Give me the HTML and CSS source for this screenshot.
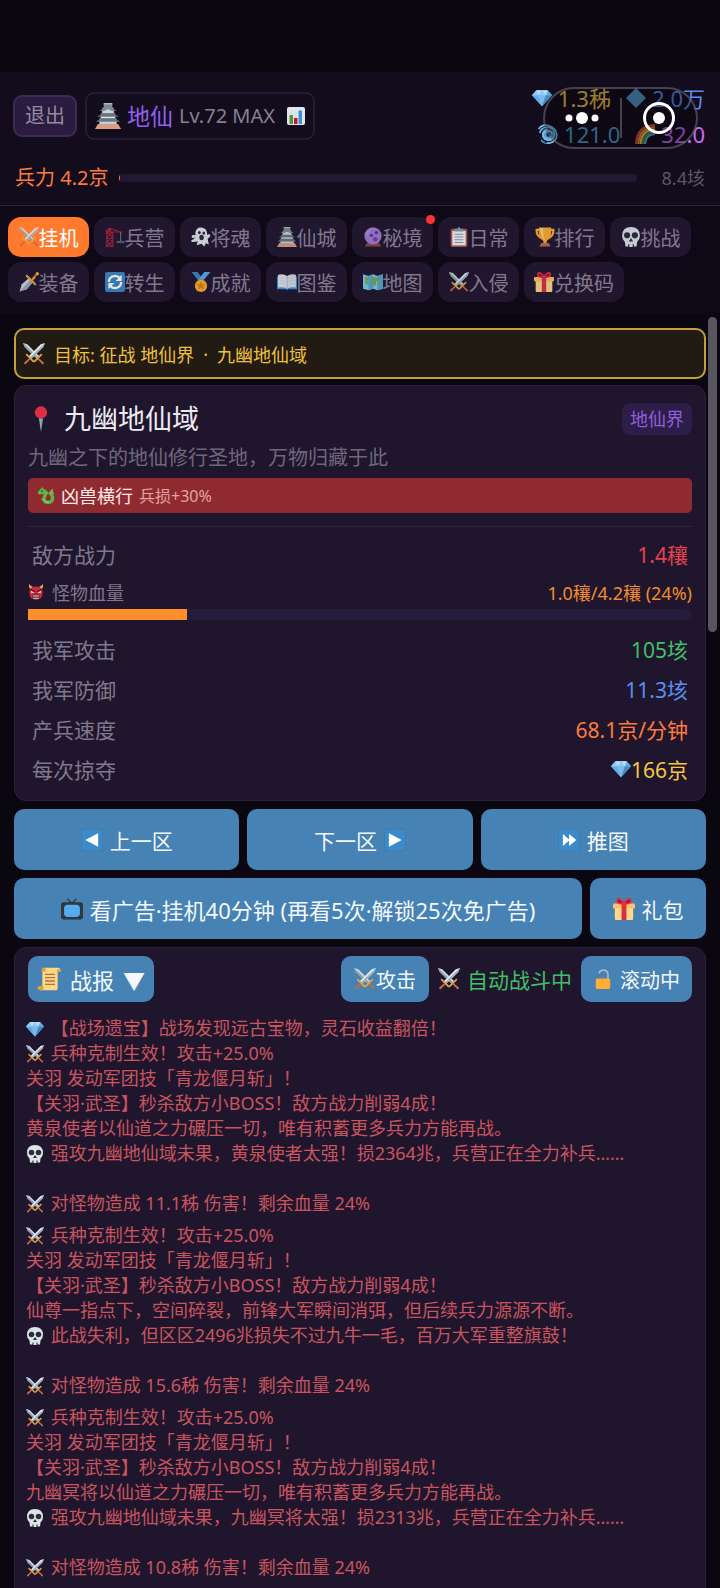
FILE: index.html
```html
<!DOCTYPE html>
<html lang="zh-CN">
<head>
<meta charset="utf-8">
<meta name="viewport" content="width=device-width, initial-scale=1">
<title>九幽地仙域</title>
<link rel="stylesheet" href="styles.css">
</head>
<body>
<svg class="sprite" aria-hidden="true">
  <symbol id="i-swords" viewBox="0 0 36 36">
    <path d="M0 0l7 2 20 20-4 4L3 7z" fill="#ccd6dd"/><path d="M0 0l25 24-2 2L3 7z" fill="#8899a6"/>
    <path d="M36 0l-7 2L9 22l4 4L33 7z" fill="#e1e8ed"/><path d="M36 0L11 24l2 2L33 7z" fill="#9aaab4"/>
    <path d="M26 25l8 7q1 3-2 3l-8-8zM10 25l-8 7q-1 3 2 3l8-8z" fill="#c1694f"/>
    <path d="M19 30l11-11M17 30L6 19" stroke="#e8a03a" stroke-width="3" stroke-linecap="round"/>
  </symbol>
  <symbol id="i-castle" viewBox="0 0 36 36">
    <path d="M4 29h28l4 7H0z" fill="#d99e82"/><path d="M6 24h24v5H6z" fill="#ccd6dd"/>
    <path d="M2 25q4-1 5-5h22q1 4 5 5v1H2z" fill="#66757f"/><path d="M8 17h20v4H8z" fill="#e1e8ed"/>
    <path d="M4 18q4-1 5-5h18q1 4 5 5v1H4z" fill="#66757f"/><path d="M10 9h16v5H10z" fill="#ccd6dd"/>
    <path d="M6 11q4-1 5-5h14q1 4 5 5zM12 1h12v5H12z" fill="#7b8a95"/><path d="M12 12q6-7 12 0z" fill="#ccd6dd"/><path d="M12 0h12v2H12z" fill="#aab8c2"/>
  </symbol>
  <symbol id="i-chart" viewBox="0 0 36 36">
    <rect width="36" height="36" rx="4" fill="#e1e8ed"/><path d="M9 1v34M18 1v34M27 1v34M1 12h34M1 23h34" stroke="#ccd6dd"/>
    <path d="M5 16h7v18H5z" fill="#5c913b"/><path d="M14 22h7v12h-7z" fill="#be1931"/><path d="M23 7h7v27h-7z" fill="#3b94d9"/>
  </symbol>
  <symbol id="i-gem" viewBox="0 0 36 36">
    <path d="M8 4h20l8 9-18 20L0 13z" fill="#8ccaf7"/><path d="M0 13h11l7 20zM28 4l8 9H25z" fill="#5dadec"/>
    <path d="M11 13h14l-7 20z" fill="#7bb9ea"/><path d="M25 13h11L18 33z" fill="#4289c1"/><path d="M8 4l3 9L18 4l7 9 3-9z" fill="#bdddf4"/><path d="M0 13L8 4l3 9z" fill="#8ccaf7"/>
  </symbol>
  <symbol id="i-diamond" viewBox="0 0 36 36"><path d="M18 0l18 18-18 18L0 18z" fill="#5299cb"/></symbol>
  <symbol id="i-cyclone" viewBox="0 0 36 36">
    <circle cx="19" cy="19" r="12" fill="#4a9fd8"/><circle cx="19" cy="19" r="4" fill="#171b3a"/>
    <path d="M1 9Q8-1 20 3t14 16q0 12-12 15-10 2-16-5M3 16q3-10 14-10t13 13q-1 9-11 9T9 19q1-7 9-7 6 0 7 7" fill="none" stroke="#79bee8" stroke-width="3"/>
    <path d="M5 23q1 9 11 11M9 10q9-6 18 3" fill="none" stroke="#1d3a5f" stroke-width="2"/>
  </symbol>
  <symbol id="i-rainbow" viewBox="0 0 36 36">
    <g fill="none" stroke-width="4"><path d="M2 36Q3 3 36 2" stroke="#dd4b39"/><path d="M6 36Q7 7 36 6" stroke="#e88a2d"/><path d="M10 36q1-25 26-26" stroke="#f4ca50"/><path d="M14 36q1-21 22-22" stroke="#5c913b"/><path d="M18 36q1-17 18-18" stroke="#55acee"/></g>
  </symbol>
  <symbol id="i-crane" viewBox="0 0 36 36">
    <g fill="none" stroke="#a5203a" stroke-width="2"><path d="M3 35V9h11v26M3 35l11-9-11-8 11-9M14 35L3 26l11-8L3 9M1 9h31M8 2L1 9M8 2l20 7M1 35h15"/></g>
    <path d="M5 2h6v7H5z" fill="#a5203a"/><path d="M28 9v17" stroke="#66757f" stroke-width="2"/><path d="M21 25h14v4H21z" fill="#55606b"/>
  </symbol>
  <symbol id="i-ghost" viewBox="0 0 36 36">
    <path d="M8 9Q10 0 19 1q10 1 10 13 4-2 6 1-1 5-5 6l2 11-5-3-3 6-5-5-9 3 2-7-8 1q-5 0-3-3 5-1 6-6-5 4-6-1 1-4 7-2z" fill="#e1e8ed"/>
    <ellipse cx="15" cy="10" rx="2.500" ry="3" fill="#292f33"/><ellipse cx="23" cy="11" rx="2.500" ry="3" fill="#292f33"/><ellipse cx="19" cy="19" rx="4" ry="5" fill="#292f33"/>
  </symbol>
  <symbol id="i-orb" viewBox="0 0 36 36">
    <path d="M7 29h22l4 6H3z" fill="#8f4937"/><circle cx="18" cy="16" r="15.500" fill="#a27ad6"/><path d="M5 12Q9 3 18 3q-9 5-9 15z" fill="#b58be0"/>
    <circle cx="15" cy="15" r="3" fill="#5c3293"/><circle cx="24" cy="10" r="3" fill="#5c3293"/><circle cx="22" cy="22" r="4" fill="#6d42a5"/>
  </symbol>
  <symbol id="i-clip" viewBox="0 0 36 36">
    <rect x="3" y="3" width="30" height="33" rx="3" fill="#a85d48"/><path d="M6 7h24v26H6z" fill="#f5f8fa"/><path d="M10 8V3h5q3-6 6 0h5v5z" fill="#8899a6"/>
    <path d="M10 13h16M10 18h16M10 23h16M10 28h16" stroke="#8899a6" stroke-width="2"/>
  </symbol>
  <symbol id="i-trophy" viewBox="0 0 36 36">
    <path d="M8 5H3q-1 12 11 16M28 5h5q1 12-11 16" fill="none" stroke="#ffac33" stroke-width="4"/><path d="M7 1h22q2 17-8 24v5h-6v-5Q5 18 7 1z" fill="#ffac33"/><path d="M10 2h4q0 14 4 22Q9 16 10 2z" fill="#ffd983"/><path d="M11 29h14l3 6H8z" fill="#c1694f"/>
  </symbol>
  <symbol id="i-skull" viewBox="0 0 36 36">
    <path d="M18 0Q34 0 34 16q0 7-5 11l-1 8h-5v-4h-2v5h-6v-5h-2v4H8l-1-8Q2 23 2 16 2 0 18 0z" fill="#dce3e9"/>
    <circle cx="11" cy="15" r="5.500" fill="#292f33"/><circle cx="25" cy="15" r="5.500" fill="#292f33"/><path d="M18 20l4 6h-8z" fill="#292f33"/>
  </symbol>
  <symbol id="i-dagger" viewBox="0 0 36 36">
    <path d="M1 35l4-13L19 10l7 7-12 14z" fill="#ccd6dd"/><path d="M1 35l21-22 4 4-12 14z" fill="#99aab5"/><path d="M24 10l8-9 3 3-9 8z" fill="#c1694f"/><path d="M14 7l15 15M24 14l4-4" stroke="#e8a03a" stroke-width="4" stroke-linecap="round"/><circle cx="33" cy="3" r="3" fill="#ffac33"/>
  </symbol>
  <symbol id="i-cycle" viewBox="0 0 36 36">
    <rect width="36" height="36" rx="4" fill="#3b88c3"/><path d="M7 18q0-10 11-11 5 0 9 4M29 18q0 10-11 11-5 0-9-4" fill="none" stroke="#fff" stroke-width="4"/><path d="M30 5v11H19zM6 31V20h11z" fill="#fff"/>
  </symbol>
  <symbol id="i-medal" viewBox="0 0 36 36">
    <path d="M1 0h11l10 14-6 5z" fill="#3b88c3"/><path d="M35 0H24L13 14l6 5z" fill="#55acee"/><path d="M12 14h12v4H12z" fill="#c1694f"/><circle cx="18" cy="25" r="11" fill="#ffac33"/><path d="M18 17l2.500 5 5.500.500-4 4 1 5.500-5-3-5 3 1-5.500-4-4 5.500-.500z" fill="#d88410"/>
  </symbol>
  <symbol id="i-book" viewBox="0 0 36 36">
    <path d="M0 8h36v23H20l-2 2-2-2H0z" fill="#3b94d9"/><path d="M2 5q9-3 16 2v23q-7-4-16-2z" fill="#e1e8ed"/><path d="M34 5q-9-3-16 2v23q7-4 16-2z" fill="#d5dee5"/>
    <path d="M5 11q6-1 10 1M5 16q6-1 10 1M5 21q6-1 10 1M31 11q-6-1-10 1M31 16q-6-1-10 1M31 21q-6-1-10 1" fill="none" stroke="#b3c0ca"/><path d="M18 7v23" stroke="#8899a6"/>
  </symbol>
  <symbol id="i-map" viewBox="0 0 36 36">
    <path d="M0 4l10 3 8-3 8 3 10-3v26l-10 3-8-3-8 3-10-3z" fill="#7cc9e6"/><path d="M10 7l8-3v26l-8 3zM26 7l10-3v26l-10 3z" fill="#55a8c8"/>
    <path d="M4 8l5 2 3 3-5 3 3 4-4 4-2-7zM18 9l8 1 5 3-3 4-4-2-1 9-4 1-3-8z" fill="#77a955"/>
  </symbol>
  <symbol id="i-gift" viewBox="0 0 36 36">
    <path d="M3 14h30v20q0 2-2 2H5q-2 0-2-2z" fill="#fdd888"/><rect y="9" width="36" height="8" rx="2" fill="#fcc26b"/><path d="M14 9h8v27h-8z" fill="#dd2e44"/><path d="M18 9Q5 10 7 3q2-5 11 5 9-10 11-5 2 7-11 6z" fill="#a0041e" stroke="#dd2e44" stroke-width="3"/>
  </symbol>
  <symbol id="i-pin" viewBox="0 0 36 36">
    <path d="M15 17h6l-3 19z" fill="#8899a6"/><path d="M16 17h2v17z" fill="#66c0c9"/><circle cx="18" cy="9" r="8.500" fill="#dd2e44"/>
  </symbol>
  <symbol id="i-dragon" viewBox="0 0 36 36">
    <path d="M14 8q6 4 1 11-4 11 6 12 11 0 10-11-1-5-5-7" fill="none" stroke="#5cb447" stroke-width="7"/><path d="M1 11l7-8 3-3 2 4q9 1 8 9l-8 1-9 1z" fill="#5cb447"/><path d="M31 3l3 12-12-2zM20 9l4 5-6 1zM10 22l5 5-7-1z" fill="#77b255"/><circle cx="10" cy="8" r="1.500" fill="#222"/><path d="M14 24q2 7 10 6" fill="none" stroke="#a6d388" stroke-width="2"/>
  </symbol>
  <symbol id="i-ogre" viewBox="0 0 36 36">
    <path d="M6 11Q0 8 3 0q2 5 8 6zM30 11q6-3 3-11-2 5-8 6z" fill="#f0a93b"/><path d="M4 11Q18 0 32 11l1 10-3 10q-12 9-24 0L3 21z" fill="#c92c42"/><path d="M6 15l9 4-7 2zM30 15l-9 4 7 2z" fill="#f7dec0"/><path d="M5 12l11 5M31 12l-11 5" stroke="#66151f" stroke-width="3"/><path d="M14 21h8l2 3H12z" fill="#83202f"/><path d="M9 25h18l-2 7q-7 4-14 0z" fill="#521722"/><path d="M11 26h14v2H11zM12 31h12v2H12z" fill="#f3e6e2"/>
  </symbol>
  <symbol id="i-prev" viewBox="0 0 36 36"><rect x=".5" y=".5" width="35" height="35" rx="3" fill="#3b8bca" stroke="#3476a8"/><path d="M28 7v22L7 18z" fill="#fff"/></symbol>
  <symbol id="i-next" viewBox="0 0 36 36"><rect x=".5" y=".5" width="35" height="35" rx="3" fill="#3b8bca" stroke="#3476a8"/><path d="M8 7v22l21-11z" fill="#fff"/></symbol>
  <symbol id="i-fast" viewBox="0 0 36 36"><rect x=".5" y=".5" width="35" height="35" rx="3" fill="#3b8bca" stroke="#3476a8"/><path d="M8 8l11 10L8 28zM18 8l12 10-12 10z" fill="#fff"/></symbol>
  <symbol id="i-tv" viewBox="0 0 36 36"><path d="M10 1l8 8 7-8" fill="none" stroke="#31373d" stroke-width="2"/><rect y="7" width="36" height="28" rx="4" fill="#31373d"/><rect x="5" y="11" width="26" height="20" rx="6" fill="#55acee"/></symbol>
  <symbol id="i-scroll" viewBox="0 0 36 36">
    <path d="M8 4q0-3 4-3h20q4 1 3 6h-4v24q0 5-5 4H6q-5 0-5-5h7z" fill="#ffd983"/><path d="M7 3q1-3 5-2 3 3-1 6H7zM1 30q6-4 9 0 1 5-4 5-5 0-5-5zM29 7h6q0-5-4-4z" fill="#e39f3d"/><path d="M12 11h15M12 16h15M12 21h15M12 26h15" stroke="#c1694f" stroke-width="2"/>
  </symbol>
  <symbol id="i-lock" viewBox="0 0 36 36"><path d="M11 8q1-6 8-6 8 0 8 9v8" fill="none" stroke="#aab8c2" stroke-width="3"/><rect x="5" y="17" width="26" height="19" rx="3" fill="#ffac33"/></symbol>
</svg>

<div class="app">
  <header class="top">
    <div class="top-row">
      <button class="exit" type="button">退出</button>
      <button class="rank" type="button"><svg class="ic ic-xl"><use href="#i-castle"/></svg><strong>地仙</strong><span>Lv.72 MAX</span><svg class="ic ic-s"><use href="#i-chart"/></svg></button>
      <div class="resources">
        <div class="res-row"><span class="res gold"><svg class="ic"><use href="#i-gem"/></svg>1.3秭</span><span class="res blue"><svg class="ic"><use href="#i-diamond"/></svg>2.0万</span></div>
        <div class="res-row"><span class="res cyan"><svg class="ic"><use href="#i-cyclone"/></svg>121.0</span><span class="res violet"><svg class="ic"><use href="#i-rainbow"/></svg>32.0</span></div>
        <div class="capsule">
          <button type="button" aria-label="更多"><svg viewBox="0 0 34 34"><circle cx="4" cy="17" r="3.500"/><circle cx="17" cy="17" r="6"/><circle cx="30" cy="17" r="3.500"/></svg></button>
          <button type="button" aria-label="关闭"><svg viewBox="0 0 34 34"><circle cx="17" cy="17" r="14.500" fill="none" stroke="#fff" stroke-width="3"/><circle cx="17" cy="17" r="6"/></svg></button>
        </div>
      </div>
    </div>
    <div class="troops"><span class="troops-now">兵力 4.2京</span><div class="track"><div class="track-fill"></div></div><span class="troops-max">8.4垓</span></div>
  </header>

  <nav class="tabs">
    <button class="tab active" type="button"><svg class="ic"><use href="#i-swords"/></svg>挂机</button>
    <button class="tab" type="button"><svg class="ic"><use href="#i-crane"/></svg>兵营</button>
    <button class="tab" type="button"><svg class="ic"><use href="#i-ghost"/></svg>将魂</button>
    <button class="tab" type="button"><svg class="ic"><use href="#i-castle"/></svg>仙城</button>
    <button class="tab dot" type="button"><svg class="ic"><use href="#i-orb"/></svg>秘境</button>
    <button class="tab" type="button"><svg class="ic"><use href="#i-clip"/></svg>日常</button>
    <button class="tab" type="button"><svg class="ic"><use href="#i-trophy"/></svg>排行</button>
    <button class="tab" type="button"><svg class="ic"><use href="#i-skull"/></svg>挑战</button>
    <button class="tab" type="button"><svg class="ic"><use href="#i-dagger"/></svg>装备</button>
    <button class="tab" type="button"><svg class="ic"><use href="#i-cycle"/></svg>转生</button>
    <button class="tab" type="button"><svg class="ic"><use href="#i-medal"/></svg>成就</button>
    <button class="tab" type="button"><svg class="ic"><use href="#i-book"/></svg>图鉴</button>
    <button class="tab" type="button"><svg class="ic"><use href="#i-map"/></svg>地图</button>
    <button class="tab" type="button"><svg class="ic"><use href="#i-swords"/></svg>入侵</button>
    <button class="tab" type="button"><svg class="ic"><use href="#i-gift"/></svg>兑换码</button>
  </nav>

  <div class="body">
    <main class="content">
      <div class="goal"><svg class="ic ic-b"><use href="#i-swords"/></svg><span>目标: 征战 地仙界</span><span>·</span><span>九幽地仙域</span></div>

      <section class="panel zone">
        <div class="zone-head"><svg class="ic ic-xl"><use href="#i-pin"/></svg><h1>九幽地仙域</h1><span class="tag">地仙界</span></div>
        <p class="desc">九幽之下的地仙修行圣地，万物归藏于此</p>
        <div class="event"><svg class="ic ic-s"><use href="#i-dragon"/></svg><b>凶兽横行</b><span>兵损+30%</span></div>
        <dl class="stats">
          <div class="stat"><dt>敌方战力</dt><dd class="red">1.4穰</dd></div>
          <div class="hp"><dt><svg class="ic ic-xs"><use href="#i-ogre"/></svg>怪物血量</dt><dd>1.0穰/4.2穰 (24%)</dd></div>
          <div class="hp-bar"><div class="hp-fill" style="width:24%"></div></div>
          <div class="stat"><dt>我军攻击</dt><dd class="green">105垓</dd></div>
          <div class="stat"><dt>我军防御</dt><dd class="blue">11.3垓</dd></div>
          <div class="stat"><dt>产兵速度</dt><dd class="orange">68.1京/分钟</dd></div>
          <div class="stat"><dt>每次掠夺</dt><dd class="gold"><svg class="ic"><use href="#i-gem"/></svg>166京</dd></div>
        </dl>
      </section>

      <div class="actions">
        <button class="btn" type="button"><svg class="ic ic-b"><use href="#i-prev"/></svg>上一区</button>
        <button class="btn" type="button">下一区<svg class="ic ic-b"><use href="#i-next"/></svg></button>
        <button class="btn" type="button"><svg class="ic ic-b"><use href="#i-fast"/></svg>推图</button>
      </div>
      <div class="actions wide">
        <button class="btn ad" type="button"><svg class="ic ic-b"><use href="#i-tv"/></svg>看广告·挂机40分钟 (再看5次·解锁25次免广告)</button>
        <button class="btn" type="button"><svg class="ic ic-b"><use href="#i-gift"/></svg>礼包</button>
      </div>

      <section class="panel report">
        <div class="report-head">
          <button class="btn small title" type="button"><svg class="ic ic-l"><use href="#i-scroll"/></svg><span>战报</span><span>▼</span></button>
          <button class="btn small tight" type="button"><svg class="ic ic-b"><use href="#i-swords"/></svg>攻击</button>
          <span class="auto"><svg class="ic ic-b"><use href="#i-swords"/></svg>自动战斗中</span>
          <button class="btn small" type="button"><svg class="ic"><use href="#i-lock"/></svg>滚动中</button>
        </div>
        <div class="log">
          <div class="entry">
            <p><svg class="ic ic-s"><use href="#i-gem"/></svg> 【战场遗宝】战场发现远古宝物，灵石收益翻倍！</p>
            <p><svg class="ic ic-s"><use href="#i-swords"/></svg> 兵种克制生效！攻击+25.0%</p>
            <p>关羽 发动军团技「青龙偃月斩」！</p>
            <p>【关羽·武圣】秒杀敌方小BOSS！敌方战力削弱4成！</p>
            <p>黄泉使者以仙道之力碾压一切，唯有积蓄更多兵力方能再战。</p>
            <p><svg class="ic ic-s"><use href="#i-skull"/></svg> 强攻九幽地仙域未果，黄泉使者太强！损2364兆，兵营正在全力补兵……</p>
            <p class="hit"><svg class="ic ic-s"><use href="#i-swords"/></svg> 对怪物造成 11.1秭 伤害！剩余血量 24%</p>
          </div>
          <div class="entry">
            <p><svg class="ic ic-s"><use href="#i-swords"/></svg> 兵种克制生效！攻击+25.0%</p>
            <p>关羽 发动军团技「青龙偃月斩」！</p>
            <p>【关羽·武圣】秒杀敌方小BOSS！敌方战力削弱4成！</p>
            <p>仙尊一指点下，空间碎裂，前锋大军瞬间消弭，但后续兵力源源不断。</p>
            <p><svg class="ic ic-s"><use href="#i-skull"/></svg> 此战失利，但区区2496兆损失不过九牛一毛，百万大军重整旗鼓！</p>
            <p class="hit"><svg class="ic ic-s"><use href="#i-swords"/></svg> 对怪物造成 15.6秭 伤害！剩余血量 24%</p>
          </div>
          <div class="entry">
            <p><svg class="ic ic-s"><use href="#i-swords"/></svg> 兵种克制生效！攻击+25.0%</p>
            <p>关羽 发动军团技「青龙偃月斩」！</p>
            <p>【关羽·武圣】秒杀敌方小BOSS！敌方战力削弱4成！</p>
            <p>九幽冥将以仙道之力碾压一切，唯有积蓄更多兵力方能再战。</p>
            <p><svg class="ic ic-s"><use href="#i-skull"/></svg> 强攻九幽地仙域未果，九幽冥将太强！损2313兆，兵营正在全力补兵……</p>
            <p class="hit"><svg class="ic ic-s"><use href="#i-swords"/></svg> 对怪物造成 10.8秭 伤害！剩余血量 24%</p>
          </div>
        </div>
      </section>
    </main>
    <div class="thumb"></div>
  </div>
</div>
</body>
</html>
```
FILE: styles.css
```css
* { box-sizing: border-box; }
body {
  margin: 0;
  background: #0c0714;
  color: #eeeaf4;
  font-family: "Noto Sans", "Noto Sans CJK SC", sans-serif;
  font-size: 20px;
}
button { font: inherit; color: inherit; border: 0; padding: 0; margin: 0; background: none; white-space: nowrap; }
h1, p, dl, dd { margin: 0; font-weight: 400; }
.sprite { position: absolute; width: 0; height: 0; }

.ic { width: 20px; height: 20px; flex: none; }
.ic-xs { width: 16px; height: 18px; }
.ic-s { width: 18px; height: 18px; }
.ic-b { width: 22px; height: 22px; }
.ic-l { width: 24px; height: 24px; }
.ic-xl { width: 26px; height: 26px; }

.app { height: 100vh; display: flex; flex-direction: column; padding-top: 72px; background: #0b0711; }

.top { background: #120c1c; border-bottom: 1px solid #2a2340; padding: 6px 15px 12px; line-height: 30px; }
.top-row { display: flex; align-items: center; gap: 8px; height: 76px; margin-left: -2px; }
.exit { height: 42px; width: 64px; border: 2px solid #3c2a55; border-radius: 9px; background: #2a1c40; color: #96899f; line-height: 30px; }
.rank { display: flex; align-items: center; gap: 6px; height: 48px; padding: 0 8px; border: 2px solid #251b38; border-radius: 9px; color: #88808f; }
.rank strong { font-size: 23px; font-weight: 400; color: #9460f0; }
.rank .ic-s { margin-left: 6px; }
.resources { position: relative; margin-left: auto; line-height: 36px; font-size: 22px; }
.res-row { display: flex; justify-content: flex-end; gap: 14px; }
.res { display: flex; align-items: center; gap: 5px; }
.res .ic { width: 22px; }
.gold { color: #f5c842; }
.blue { color: #5b8def; }
.cyan { color: #4aa3cf; }
.violet { color: #c96bf5; }
.capsule { position: absolute; top: 7px; right: 7px; width: 155px; height: 62px; display: flex; align-items: center; border: 2px solid rgba(130, 125, 135, .5); border-radius: 32px; background: rgba(5, 3, 9, .38); }
.capsule button { flex: 1; display: flex; justify-content: center; height: 40px; align-items: center; }
.capsule button + button { border-left: 2px solid rgba(130, 125, 135, .5); }
.capsule svg { width: 34px; height: 34px; fill: #fff; }

.troops { display: flex; align-items: center; margin-top: 9px; }
.troops-now { color: #ff7a3c; width: 104px; white-space: nowrap; }
.track { flex: 1; height: 8px; border-radius: 4px; background: #211834; overflow: hidden; }
.track-fill { width: 1px; height: 8px; background: #ff7a3c; }
.troops-max { width: 68px; text-align: right; font-size: 18px; color: #5d5667; }

.tabs { display: flex; flex-wrap: wrap; gap: 5px; padding: 11px 8px 12px; background: #0f0817; }
.tab { display: flex; align-items: center; justify-content: center; height: 40px; min-width: 81px; padding: 0 10px; border-radius: 13px; background: #20172f; color: #81788e; }
.tab .ic { opacity: .88; }
.tab.active { background: #ff7a2c; color: #fff; }
.dot { position: relative; }
.dot::after { content: ""; position: absolute; top: -2px; right: -2px; width: 9px; height: 9px; border-radius: 50%; background: #f33; }

.body { position: relative; flex: 1; min-height: 0; }
.content { height: 100%; overflow-y: auto; scrollbar-width: none; padding: 14px 14px 0; display: flex; flex-direction: column; gap: 8px; }
.content > * { flex: none; }
.thumb { position: absolute; top: 3px; right: 3px; width: 9px; height: 315px; border-radius: 5px; background: #58555e; }

.goal { display: flex; align-items: center; gap: 9px; height: 51px; padding: 0 7px; margin-bottom: -2px; border: 2px solid #c4a03a; border-radius: 10px; background: #221b13; color: #f0c03c; font-size: 18px; }
.panel { border: 1px solid #2a213c; border-radius: 12px; background: #1f162d; }
.zone { padding: 15px 13px 11px; }
.zone-head { display: flex; align-items: center; gap: 10px; height: 36px; }
h1 { flex: 1; font-size: 27px; line-height: 36px; }
.tag { padding: 0 8px; border-radius: 8px; background: #2c1e49; color: #8f5fdc; font-size: 18px; line-height: 32px; }
.desc { margin-top: 6px; line-height: 30px; color: #6f677c; }
.event { display: flex; align-items: center; gap: 6px; height: 35px; margin-top: 5px; padding: 0 9px; border-radius: 5px; background: #8f2b30; font-size: 18px; line-height: 24px; }
.event b { font-weight: 400; color: #ffe9e9; }
.event span { font-size: 16px; color: #e3a3a7; }
.stats { margin-top: 13px; padding-top: 7px; border-top: 1px solid #2b2340; }
.stat, .hp { display: flex; justify-content: space-between; align-items: center; }
.stat { height: 40px; padding: 0 4px; font-size: 21px; }
.stat dt, .hp dt { color: #80788c; }
.stat dd { display: flex; align-items: center; }
.hp { height: 35px; font-size: 18px; }
.hp dt { display: flex; align-items: center; gap: 8px; }
.hp dd { color: #ef8c2f; }
.hp-bar { height: 11px; margin-bottom: 9px; border-radius: 0 5px 5px 0; background: #251b3a; overflow: hidden; }
.hp-fill { height: 100%; background: #ff8f2b; }
.red { color: #e5414f; }
.green { color: #3fbf68; }
.orange { color: #ff7a3c; }

.actions { display: grid; grid-template-columns: repeat(3, 1fr); gap: 8px; }
.actions.wide { grid-template-columns: 1fr 116px; }
.btn { display: flex; align-items: center; justify-content: center; gap: 7px; height: 61px; border-radius: 10px; background: #4682b4; color: #f4f9ff; font-size: 21px; }
.btn.ad { font-size: 22px; }
.btn.small { height: 46px; padding: 0 12px; font-size: 20px; }
.btn.title { margin-right: auto; padding: 0 9px; font-size: 22px; gap: 9px; }
.btn.tight { gap: 0; padding: 0 13px; }

.report { padding: 8px 13px 40px 11px; }
.report-head { display: flex; align-items: center; gap: 9px; padding-left: 2px; }
.auto { display: flex; align-items: center; gap: 7px; color: #3fbf68; font-size: 21px; }
.log { margin-top: 14px; font-size: 18px; line-height: 25px; color: #c9545f; }
.entry { margin-bottom: 7px; }
.log .ic { margin-right: 2px; vertical-align: -3px; }
.hit { margin-top: 25px; }
```
